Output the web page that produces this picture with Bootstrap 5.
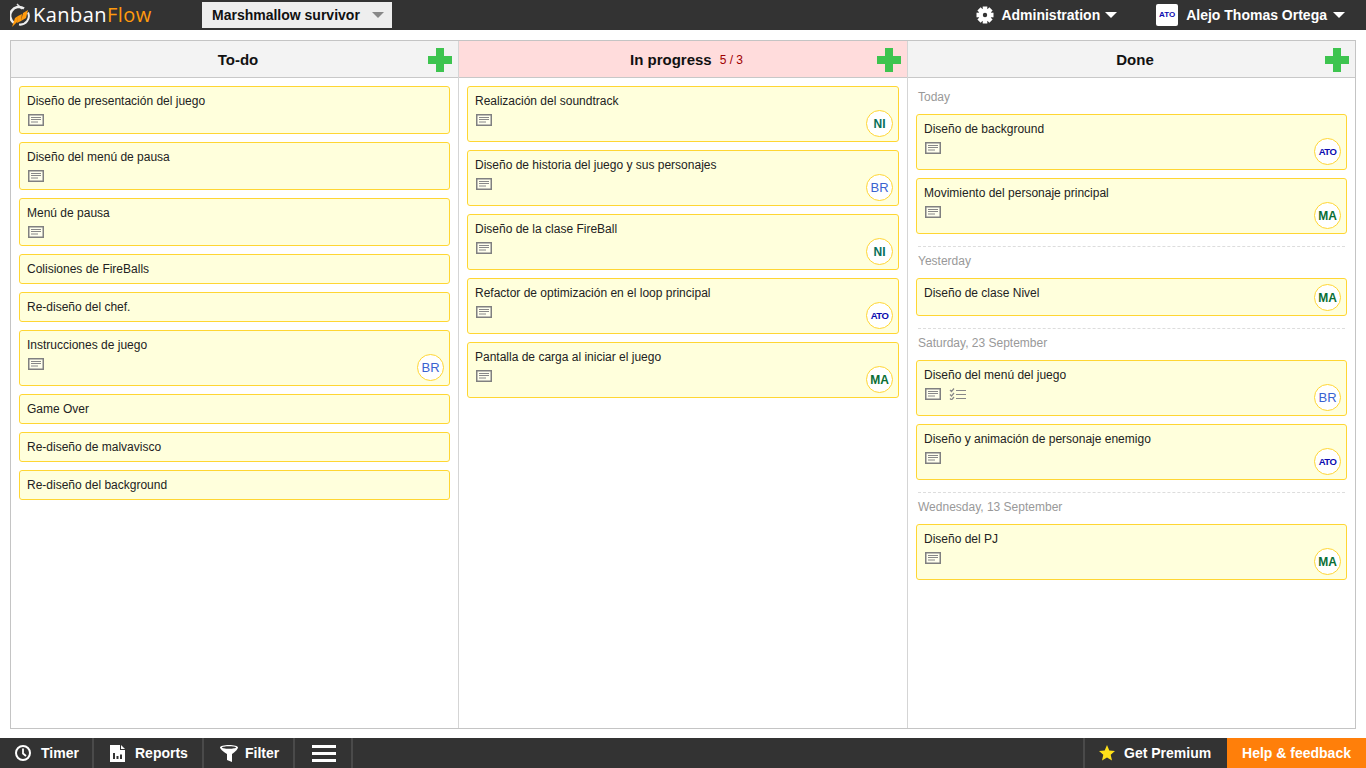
<!DOCTYPE html>
<html lang="en">
<head>
    <meta charset="UTF-8">
    <meta name="viewport" content="width=device-width, initial-scale=1.0">
    <title>KanbanFlow</title>
    <link href="https://cdn.jsdelivr.net/npm/bootstrap@5.3.0/dist/css/bootstrap.min.css" rel="stylesheet">
    <style>
        html, body { height: 100%; }
        body {
            margin: 0;
            font-family: "Liberation Sans", Arial, sans-serif;
            font-size: 12px;
            line-height: 16px;
            color: #222;
            background: #fff;
            overflow: hidden;
        }
        .kf-page { height: 768px; }
        .kf-top { height: 30px; background: #333; flex: none; }
        .kf-logo { width: 202px; padding-left: 10px; }
        .kf-logo-text { font-family: "Open Sans", sans-serif; font-size: 20px; line-height: 30px; letter-spacing: .45px; color: #fff; margin-left: 2px; }
        .kf-logo-text span { color: #ff9a0d; }
        .kf-project { width: 190px; height: 26px; margin-top: 2px; background: #eee; padding: 0 8px 0 10px; font-size: 14px; font-weight: 700; color: #111; }
        .kf-caret { width: 0; height: 0; border-style: solid; border-width: 6px 6px 0; border-color: #fff transparent transparent; }
        .kf-project .kf-caret { border-top-color: #888; }
        .kf-menu { font-size: 14px; font-weight: 700; color: #fff; }
        .kf-menu-label { margin-left: 7px; }
        .kf-menu-caret { margin-left: 5px; }
        .kf-userpic { width: 22px; height: 22px; margin-left: 39px; background: #fff; border-radius: 2px; color: #0b0bb0; font-size: 8px; font-weight: 700; }
        .kf-username { margin-left: 8px; }
        .kf-user-caret { margin-left: 6px; margin-right: 21px; }
        .kf-board-wrap { flex: 1; padding: 10px 10px 9px; min-height: 0; }
        .kf-board { height: 100%; border: 1px solid #c4c4c4; }
        .kf-col { flex: 1; min-width: 0; border-left: 1px solid #d5d5d5; }
        .kf-col:first-child { border-left: 0; width: 447px; flex: none; }
        .kf-col:nth-child(2) { width: 449px; flex: none; }
        .kf-col-head { height: 37px; background: #f3f3f3; border-bottom: 1px solid #c8c8c8; font-size: 15px; font-weight: 700; color: #111; padding: 2px 0 0 7px; }
        .kf-col-head.kf-over { background: #ffdcdc; }
        .kf-count { font-size: 12px; font-weight: 400; color: #a00000; margin-left: 8px; }
        .kf-plus { position: absolute; right: 6px; top: 7px; width: 24px; height: 24px; }
        .kf-col-body { padding: 8px 8px 0; }
        .kf-task { position: relative; background: #ffffdc; border: 1px solid #ffd633; border-radius: 3px; padding: 6px 7px; margin-bottom: 8px; color: #222; }
        .kf-task.kf-assigned { padding-bottom: 14px; }
        .kf-icons { height: 13px; margin-top: 5px; padding-left: 1px; }
        .kf-icons svg { display: block; }
        .kf-assignee { position: absolute; right: 5px; bottom: 4px; width: 27px; height: 27px; border-radius: 50%; border: 1px solid #ffd633; background: #fff; font-size: 13px; }
        .kf-br { color: #3a62d0; }
        .kf-ni { color: #06705a; font-weight: 700; font-size: 12px; }
        .kf-ma { color: #0a6e35; font-weight: 700; font-size: 12px; }
        .kf-ato { color: #0b0bb0; font-weight: 700; font-size: 9.5px; letter-spacing: -.5px; }
        .kf-day { color: #999; padding: 3px 2px 9px; }
        .kf-day.kf-sep { border-top: 1px dashed #ddd; margin: 12px 2px 0; padding: 6px 0 9px; }
        .kf-bottom { height: 30px; background: #333; flex: none; font-size: 14px; font-weight: 700; color: #fff; }
        .kf-tool { height: 30px; border-right: 2px solid #4a4a4a; }
        .kf-tool-timer { width: 94px; padding-left: 14px; gap: 9px; }
        .kf-tool-reports { width: 110px; padding-left: 16px; gap: 10px; }
        .kf-tool-filter { width: 91px; padding-left: 16px; gap: 7px; }
        .kf-tool-menu { width: 58px; padding-left: 17px; }
        .kf-premium { width: 144px; height: 30px; border-left: 2px solid #4a4a4a; padding-left: 14px; gap: 9px; }
        .kf-help { width: 139px; height: 30px; background: #ff7f0a; justify-content: center; }
    </style>
</head>
<body>
<svg width="0" height="0" class="position-absolute">
    <symbol id="note" viewBox="0 0 16 12">
        <rect x=".75" y=".75" width="14.5" height="10.500" fill="#ffffee" stroke="#808080" stroke-width="1.500"/>
        <path d="M3 3.500h10M3 5.500h10M3 8h7" stroke="#888" fill="none"/>
    </symbol>
    <symbol id="plus" viewBox="0 0 24 24">
        <path d="M8 0h8v8h8v8h-8v8H8v-8H0V8h8z" fill="#3dc44f"/>
    </symbol>
</svg>

<div class="kf-page d-flex flex-column">
    <div class="kf-top d-flex">
        <div class="kf-logo d-flex align-items-center">
            <svg width="21" height="26" viewBox="0 0 21 26">
                <path d="M7 2l5 5" stroke="#ddd" stroke-width="1.500" fill="none"/>
                <path d="M14 6.500A8.500 8.500 0 0 0 4 21" stroke="#eee" stroke-width="2.500" fill="none"/>
                <path d="M18 10.500A8.500 8.500 0 0 1 9 22.500" stroke="#eee" stroke-width="2" fill="none"/>
                <path d="M2 25l3-9 3-2-1 6zM8 14l4-2-1 7-4 2zM13 11l5-3-2 8-5 3z" fill="#ff9a0d"/>
            </svg>
            <span class="kf-logo-text">Kanban<span>Flow</span></span>
        </div>
        <div class="kf-project d-flex align-items-center justify-content-between">
            Marshmallow survivor
            <i class="kf-caret"></i>
        </div>
        <div class="kf-menu d-flex align-items-center ms-auto">
            <svg width="18" height="18" viewBox="0 0 18 18">
                <g fill="#fff">
                    <circle cx="9" cy="9" r="6.500"/>
                    <rect x="6.700" y=".5" width="4.600" height="17"/>
                    <rect x="6.700" y=".5" width="4.600" height="17" transform="rotate(45 9 9)"/>
                    <rect x="6.700" y=".5" width="4.600" height="17" transform="rotate(90 9 9)"/>
                    <rect x="6.700" y=".5" width="4.600" height="17" transform="rotate(135 9 9)"/>
                </g>
                <circle cx="9" cy="9" r="2.200" fill="#333"/>
            </svg>
            <span class="kf-menu-label">Administration</span>
            <i class="kf-caret kf-menu-caret"></i>
            <span class="kf-userpic d-flex align-items-center justify-content-center">ATO</span>
            <span class="kf-username">Alejo Thomas Ortega</span>
            <i class="kf-caret kf-user-caret"></i>
        </div>
    </div>

    <div class="kf-board-wrap">
        <div class="kf-board d-flex">
            <div class="kf-col">
                <div class="kf-col-head position-relative d-flex align-items-center justify-content-center">To-do
                    <svg class="kf-plus"><use href="#plus"/></svg>
                </div>
                <div class="kf-col-body">
                    <div class="kf-task">Diseño de presentación del juego<div class="kf-icons"><svg width="16" height="12"><use href="#note"/></svg></div></div>
                    <div class="kf-task">Diseño del menú de pausa<div class="kf-icons"><svg width="16" height="12"><use href="#note"/></svg></div></div>
                    <div class="kf-task">Menú de pausa<div class="kf-icons"><svg width="16" height="12"><use href="#note"/></svg></div></div>
                    <div class="kf-task">Colisiones de FireBalls</div>
                    <div class="kf-task">Re-diseño del chef.</div>
                    <div class="kf-task kf-assigned">Instrucciones de juego<div class="kf-icons"><svg width="16" height="12"><use href="#note"/></svg></div><span class="kf-assignee kf-br d-flex align-items-center justify-content-center">BR</span></div>
                    <div class="kf-task">Game Over</div>
                    <div class="kf-task">Re-diseño de malvavisco</div>
                    <div class="kf-task">Re-diseño del background</div>
                </div>
            </div>
            <div class="kf-col">
                <div class="kf-col-head kf-over position-relative d-flex align-items-center justify-content-center">In progress <span class="kf-count">5 / 3</span>
                    <svg class="kf-plus"><use href="#plus"/></svg>
                </div>
                <div class="kf-col-body">
                    <div class="kf-task kf-assigned">Realización del soundtrack<div class="kf-icons"><svg width="16" height="12"><use href="#note"/></svg></div><span class="kf-assignee kf-ni d-flex align-items-center justify-content-center">NI</span></div>
                    <div class="kf-task kf-assigned">Diseño de historia del juego y sus personajes<div class="kf-icons"><svg width="16" height="12"><use href="#note"/></svg></div><span class="kf-assignee kf-br d-flex align-items-center justify-content-center">BR</span></div>
                    <div class="kf-task kf-assigned">Diseño de la clase FireBall<div class="kf-icons"><svg width="16" height="12"><use href="#note"/></svg></div><span class="kf-assignee kf-ni d-flex align-items-center justify-content-center">NI</span></div>
                    <div class="kf-task kf-assigned">Refactor de optimización en el loop principal<div class="kf-icons"><svg width="16" height="12"><use href="#note"/></svg></div><span class="kf-assignee kf-ato d-flex align-items-center justify-content-center">ATO</span></div>
                    <div class="kf-task kf-assigned">Pantalla de carga al iniciar el juego<div class="kf-icons"><svg width="16" height="12"><use href="#note"/></svg></div><span class="kf-assignee kf-ma d-flex align-items-center justify-content-center">MA</span></div>
                </div>
            </div>
            <div class="kf-col">
                <div class="kf-col-head position-relative d-flex align-items-center justify-content-center">Done
                    <svg class="kf-plus"><use href="#plus"/></svg>
                </div>
                <div class="kf-col-body">
                    <div class="kf-day">Today</div>
                    <div class="kf-task kf-assigned">Diseño de background<div class="kf-icons"><svg width="16" height="12"><use href="#note"/></svg></div><span class="kf-assignee kf-ato d-flex align-items-center justify-content-center">ATO</span></div>
                    <div class="kf-task kf-assigned">Movimiento del personaje principal<div class="kf-icons"><svg width="16" height="12"><use href="#note"/></svg></div><span class="kf-assignee kf-ma d-flex align-items-center justify-content-center">MA</span></div>
                    <div class="kf-day kf-sep">Yesterday</div>
                    <div class="kf-task kf-assigned">Diseño de clase Nivel<span class="kf-assignee kf-ma d-flex align-items-center justify-content-center">MA</span></div>
                    <div class="kf-day kf-sep">Saturday, 23 September</div>
                    <div class="kf-task kf-assigned">Diseño del menú del juego
                        <div class="kf-icons d-flex gap-2">
                            <svg width="16" height="12"><use href="#note"/></svg>
                            <svg width="18" height="12" viewBox="0 0 18 12">
                                <path d="M1 2l1.500 1.500L5 .5M1 6.500L2.500 8 5 5M1 10.500L2.500 12 5 9" stroke="#888" stroke-width="1.200" fill="none"/>
                                <path d="M7 2.500h10M7 6.500h10M7 10.500h10" stroke="#888" fill="none"/>
                            </svg>
                        </div>
                        <span class="kf-assignee kf-br d-flex align-items-center justify-content-center">BR</span></div>
                    <div class="kf-task kf-assigned">Diseño y animación de personaje enemigo<div class="kf-icons"><svg width="16" height="12"><use href="#note"/></svg></div><span class="kf-assignee kf-ato d-flex align-items-center justify-content-center">ATO</span></div>
                    <div class="kf-day kf-sep">Wednesday, 13 September</div>
                    <div class="kf-task kf-assigned">Diseño del PJ<div class="kf-icons"><svg width="16" height="12"><use href="#note"/></svg></div><span class="kf-assignee kf-ma d-flex align-items-center justify-content-center">MA</span></div>
                </div>
            </div>
        </div>
    </div>

    <div class="kf-bottom d-flex">
        <div class="kf-tool kf-tool-timer d-flex align-items-center">
            <svg width="18" height="18" viewBox="0 0 18 18">
                <circle cx="9" cy="9" r="7" fill="none" stroke="#fff" stroke-width="2"/>
                <path d="M9 4.500V9.500l3 2.500" fill="none" stroke="#fff" stroke-width="1.800"/>
            </svg>
            Timer
        </div>
        <div class="kf-tool kf-tool-reports d-flex align-items-center">
            <svg width="15" height="17" viewBox="0 0 15 17">
                <path fill="#fff" fill-rule="evenodd" d="M0 0h9l1 0v5h5v12H0zM3 8v6h2V8zM6.500 11v3h2v-3zM10 9.500V14h2V9.500zM11 0l4 4h-4z"/>
            </svg>
            Reports
        </div>
        <div class="kf-tool kf-tool-filter d-flex align-items-center">
            <svg width="18" height="17" viewBox="0 0 18 17">
                <path fill="#fff" fill-rule="evenodd" d="M0 2.500C0 1 4 0 9 0s9 1 9 2.500c0 1-2 4-6 6.500v8L7 15V9C2.500 6.500 0 3.500 0 2.500zM2 2.500c0 .6 3 1.300 7 1.300s7-.7 7-1.300-3-1.300-7-1.300-7 .7-7 1.300z"/>
            </svg>
            Filter
        </div>
        <div class="kf-tool kf-tool-menu d-flex align-items-center">
            <svg width="24" height="17" viewBox="0 0 24 17">
                <path fill="#fff" d="M0 0h24v3H0zM0 7h24v3H0zM0 14h24v3H0z"/>
            </svg>
        </div>
        <div class="kf-premium d-flex align-items-center ms-auto">
            <svg width="16" height="16" viewBox="0 0 16 16">
                <path fill="#ffe11a" d="M8 0l2.300 5.400 5.700.5-4.300 3.800 1.300 5.800L8 12.500l-5 3 1.300-5.800L0 5.900l5.700-.5z"/>
            </svg>
            Get Premium
        </div>
        <div class="kf-help d-flex align-items-center">Help &amp; feedback</div>
    </div>
</div>
<script src="https://cdn.jsdelivr.net/npm/bootstrap@5.3.0/dist/js/bootstrap.bundle.min.js"></script>
</body>
</html>
